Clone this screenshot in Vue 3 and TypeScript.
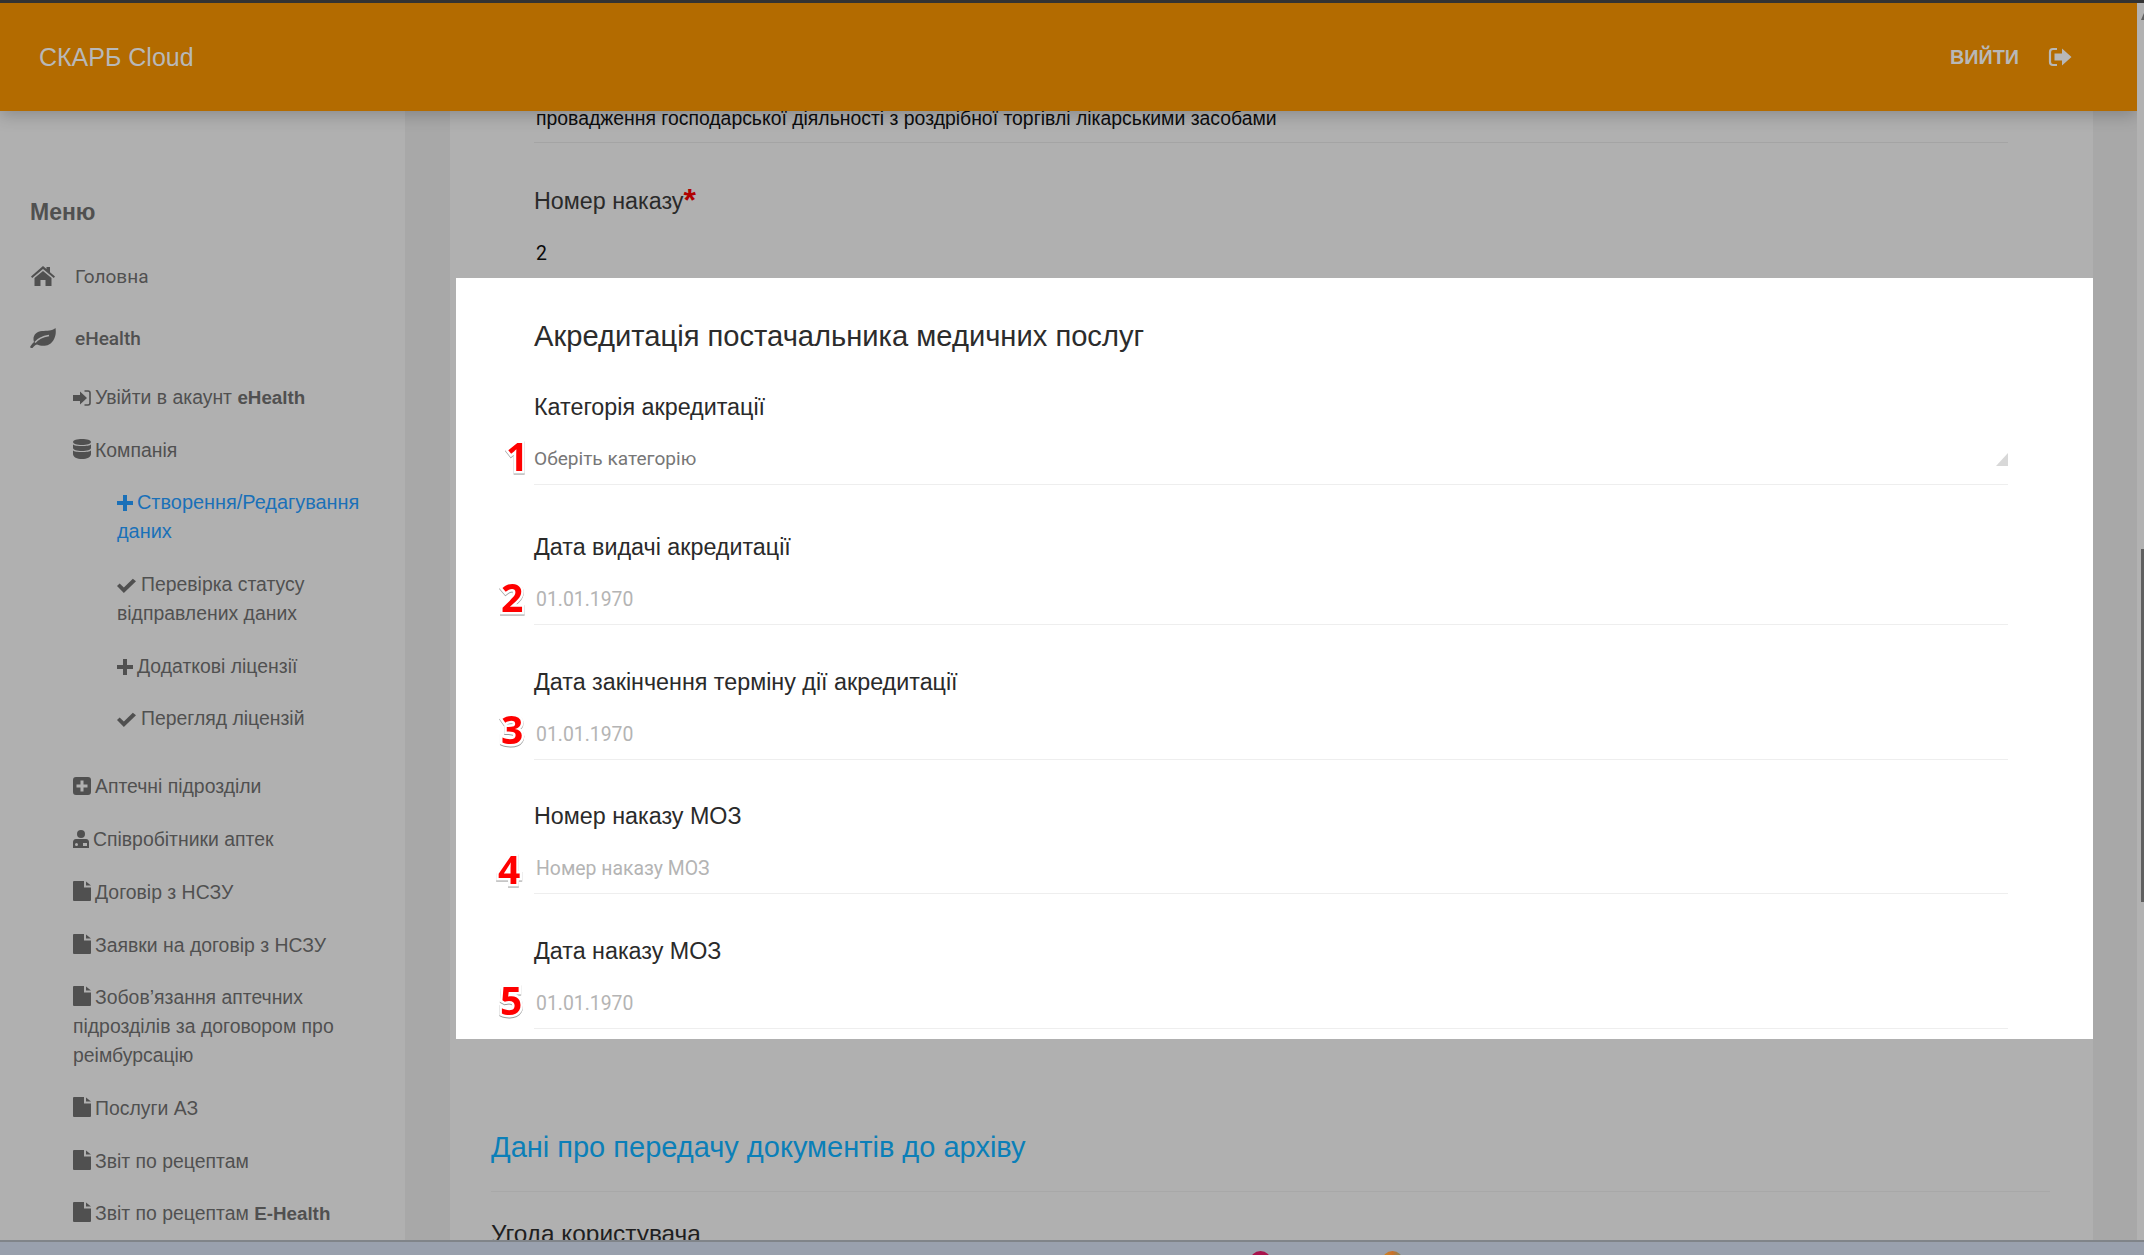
<script setup lang="ts">
interface NavItem { icon: string; text: string; bold?: string; level: number; active?: boolean; gapped?: boolean }
const nav: NavItem[] = [
  { icon: 'signin', text: 'Увійти в акаунт ', bold: 'eHealth', level: 1 },
  { icon: 'db', text: 'Компанія', level: 1 },
  { icon: 'plus', text: 'Створення/Редагування даних', level: 2, active: true },
  { icon: 'check', text: 'Перевірка статусу відправлених даних', level: 2 },
  { icon: 'plus', text: 'Додаткові ліцензії', level: 2 },
  { icon: 'check', text: 'Перегляд ліцензій', level: 2 },
  { icon: 'plusbox', text: 'Аптечні підрозділи', level: 1, gapped: true },
  { icon: 'doctor', text: 'Співробітники аптек', level: 1 },
  { icon: 'file', text: 'Договір з НСЗУ', level: 1 },
  { icon: 'file', text: 'Заявки на договір з НСЗУ', level: 1 },
  { icon: 'file', text: 'Зобов’язання аптечних підрозділів за договором про реімбурсацію', level: 1 },
  { icon: 'file', text: 'Послуги АЗ', level: 1 },
  { icon: 'file', text: 'Звіт по рецептам', level: 1 },
  { icon: 'file', text: 'Звіт по рецептам ', bold: 'E-Health', level: 1 },
]
const fields = [
  { label: 'Категорія акредитації', value: 'Оберіть категорію', kind: 'select', n: '1' },
  { label: 'Дата видачі акредитації', value: '01.01.1970', kind: 'input', n: '2' },
  { label: 'Дата закінчення терміну дії акредитації', value: '01.01.1970', kind: 'input', n: '3' },
  { label: 'Номер наказу МОЗ', value: 'Номер наказу МОЗ', kind: 'input', n: '4' },
  { label: 'Дата наказу МОЗ', value: '01.01.1970', kind: 'input', n: '5' },
]
</script>

<template>
  <div class="screen">
    <header class="topbar">
      <span class="brand">СКАРБ Cloud</span>
      <span class="logout">ВИЙТИ
        <svg class="logout-icon" viewBox="0 0 24 20" width="24" height="20">
          <path fill="none" stroke="currentColor" stroke-width="2.2" d="M9 2H5a3 3 0 0 0-3 3v10a3 3 0 0 0 3 3h4" />
          <path fill="currentColor" d="M14 1.500 23.500 10 14 18.500V13.500H6.500V6.500H14z" />
        </svg>
      </span>
    </header>
    <div class="body">
      <aside class="sidebar">
        <h3 class="menu-title">Меню</h3>
        <a class="top-link">
          <svg class="top-icon" viewBox="0 0 24 20" width="24" height="20"><path fill="currentColor" d="M12 0 15.500 3V1H19V6.200L24 10.500 22.800 12 12 3 1.200 12 0 10.500zM12 5 20.500 12V20H14.500V14H9.500V20H3.500V12z" /></svg>
          <span>Головна</span>
        </a>
        <a class="top-link second">
          <svg class="leaf-icon" viewBox="0 0 26 20" width="26" height="20">
            <path fill="currentColor" d="M25.500 0C26.500 6 25 13 19 16.500 14 19 10 17.500 7 16.500 5 17 3.500 18.500 2.500 20H0.800C0 19.500 0 18.500 1 17.500 2 16 3 15 4 14 2 8 6 3.500 12 3 17 2.600 22 3 25.500 0Z" />
            <path fill="none" stroke="#b0b0b0" stroke-width="1.500" d="M5 14.500C8 10.500 13 8.500 19 7.500" />
          </svg>
          <span class="semi">eHealth</span>
        </a>
        <ul class="nav">
          <li v-for="item in nav" :key="item.text + item.icon" class="nav-item" :class="['lvl' + item.level, { active: item.active, gapped: item.gapped }]">
            <svg v-if="item.icon === 'signin'" class="ico" viewBox="0 0 18 16" width="18" height="16"><path fill="currentColor" d="M7 1.500 14 8 7 14.500V11H0V5H7z" /><path fill="none" stroke="currentColor" stroke-width="1.600" d="M11.500 1H15a2 2 0 0 1 2 2V13a2 2 0 0 1-2 2H11.500" /></svg>
            <svg v-else-if="item.icon === 'db'" class="ico" viewBox="0 0 18 20" width="18" height="20"><path fill="currentColor" d="M9 0C14 0 18 1.300 18 3S14 6 9 6 0 4.700 0 3 4 0 9 0ZM0 5.500C2 7.500 16 7.500 18 5.500V9C18 10.700 14 12 9 12S0 10.700 0 9ZM0 11.500C2 13.500 16 13.500 18 11.500V15C18 18 14 20 9 20S0 18 0 15Z" /></svg>
            <svg v-else-if="item.icon === 'plus'" class="ico" viewBox="0 0 16 16" width="16" height="16"><path fill="currentColor" d="M6 0H10V6H16V10H10V16H6V10H0V6H6Z" /></svg>
            <svg v-else-if="item.icon === 'check'" class="ico ico-check" viewBox="0 0 18 14" width="19" height="15"><path fill="currentColor" d="M0 7.500 2.500 5 6.500 9 15 0.500 18 3 6.500 14Z" /></svg>
            <svg v-else-if="item.icon === 'plusbox'" class="ico" viewBox="0 0 18 18" width="18" height="18"><path fill="currentColor" fill-rule="evenodd" d="M3 0H15A3 3 0 0 1 18 3V15A3 3 0 0 1 15 18H3A3 3 0 0 1 0 15V3A3 3 0 0 1 3 0ZM7.500 3.500V7.500H3.500V10.500H7.500V14.500H10.500V10.500H14.500V7.500H10.500V3.500Z" /></svg>
            <svg v-else-if="item.icon === 'doctor'" class="ico" viewBox="0 0 16 18" width="16" height="18"><circle cx="8" cy="4" r="4" fill="currentColor" /><path fill="currentColor" fill-rule="evenodd" d="M3 9H13C15 9 16 10.500 16 12V18H0V12C0 10.500 1 9 3 9ZM3.500 13A1.500 1.500 0 1 0 3.500 16 1.500 1.500 0 0 0 3.500 13ZM10 13V16H14V13Z" /></svg>
            <svg v-else class="ico" viewBox="0 0 18 20" width="18" height="20"><path fill="currentColor" d="M0 1A1 1 0 0 1 1 0H11V6.500H18V19A1 1 0 0 1 17 20H1A1 1 0 0 1 0 19ZM13 0.500 18 4.500H13Z" /></svg>
            <span>{{ item.text }}<b v-if="item.bold">{{ item.bold }}</b></span>
          </li>
        </ul>
      </aside>
      <div class="gutter" />
      <main class="content">
        <div class="form-head">
          <p class="prev-text">провадження господарської діяльності з роздрібної торгівлі лікарськими засобами</p>
          <div class="row-order">
            <label class="dim-label">Номер наказу<i class="req">*</i></label>
            <div class="dim-value">2</div>
          </div>
        </div>
        <section class="spot">
          <h2 class="spot-title">Акредитація постачальника медичних послуг</h2>
          <div v-for="f in fields" :key="f.n" class="field" :class="'f' + f.n">
            <label class="field-label">{{ f.label }}</label>
            <div class="field-value" :class="f.kind">
              <span class="mark" :class="'m' + f.n">{{ f.n }}</span>
              {{ f.value }}
              <i v-if="f.kind === 'select'" class="tri" />
            </div>
          </div>
        </section>
        <section class="archive">
          <h2 class="archive-title">Дані про передачу документів до архіву</h2>
          <label class="user-label">Угода користувача</label>
        </section>
      </main>
      <div class="gutter right" />
    </div>
    <div class="scrollbar">
      <i class="sb-arrow" />
      <i class="sb-thumb" />
    </div>
    <footer class="taskbar">
      <i class="dot dot-red" />
      <i class="dot dot-multi" />
    </footer>
  </div>
</template>

<style scoped>
.screen { position: relative; width: 2144px; height: 1255px; display: flex; flex-direction: column; overflow: hidden; background: #b0b0b0; border-top: 3px solid #333; box-sizing: border-box; font-family: "Liberation Sans", Arial, sans-serif; }
.topbar { flex: none; height: 108px; width: 2137px; background: #b36b00; display: flex; align-items: center; justify-content: space-between; padding: 0 65px 0 39px; box-sizing: border-box; box-shadow: 0 4px 16px rgba(0,0,0,.22); position: relative; z-index: 2; color: #b8b8b8; }
.brand { font-size: 25px; }
.logout { font-size: 19.800px; font-weight: 700; display: flex; align-items: center; gap: 29px; }
.logout-icon { display: block; }
.body { flex: 1; min-height: 0; display: flex; overflow: hidden; }
.sidebar { flex: none; width: 405px; box-sizing: border-box; padding: 0 30px; color: #505050; font-family: Roboto, "Liberation Sans", sans-serif; font-size: 19px; overflow: hidden; }
.menu-title { margin: 89px 0 0; font: 700 23px/24px "Liberation Sans", sans-serif; }
.top-link { display: flex; align-items: center; height: 30px; margin-top: 37px; gap: 20px; }
.top-link.second { margin-top: 32px; }
.top-icon { flex: none; margin-left: 1px; width: 24px; }
.leaf-icon { flex: none; margin: 0 -1px 0 0; width: 26px; height: 20px; }
.semi { font-weight: 500; }
.nav { list-style: none; margin: 30px 0 0; padding: 0; font-family: "Liberation Sans", sans-serif; font-size: 19.400px; }
.nav-item { line-height: 29px; margin-bottom: 23.700px; padding-left: 43px; }
.nav-item.lvl2 { padding-left: 87px; padding-right: 8px; }
.nav-item.active { color: #1a70b8; font-size: 19.900px; }
.nav-item.gapped { margin-top: 39px; }
.nav-item b { font-weight: 700; font-size: 18.800px; }
.ico { margin-right: 4px; vertical-align: -2px; }
.ico-check { margin-right: 5px; }
.gutter { flex: none; width: 45px; background: #a8a8a8; }
.gutter.right { width: 44px; }
.content { flex: none; width: 1643px; box-sizing: border-box; overflow: hidden; background: #b0b0b0; }
.form-head { padding: 0 84px; height: 167px; box-sizing: border-box; }
.prev-text { margin: 0; height: 32px; line-height: 14px; font-size: 19.400px; color: #0c0c0c; border-bottom: 1px solid #a4a4a4; width: 1474px; padding-left: 2px; box-sizing: border-box; }
.row-order { padding-top: 44px; }
.dim-label { display: block; font-size: 23.300px; line-height: 28px; color: #2a2a2a; }
.req { color: #b00000; font-style: normal; font-weight: 700; font-size: 32px; line-height: 0; vertical-align: -2px; }
.dim-value { font: 19.400px/24px Roboto, sans-serif; color: #0a0a0a; margin: 27px 0 0 2px; }
.spot { margin-left: 6px; background: #fff; height: 761px; box-sizing: border-box; padding: 42px 83px 0 78px; }
.spot-title { margin: 0 0 41px; font-weight: 400; font-size: 29.150px; line-height: 32px; color: #2c2c2c; }
.field { height: 134.500px; }
.f1 { height: 140px; }
.field-label { display: block; font-size: 23.300px; line-height: 28px; color: #2a2a2a; }
.field-value { position: relative; height: 51px; margin-top: 13px; box-sizing: border-box; border-bottom: 1px solid #eee; padding: 14px 0 0 2px; font: 19.400px/24px Roboto, sans-serif; color: #b4b4b4; width: 1474px; }
.f1 .field-value { padding: 13px 0 0; color: #777; font-size: 19.100px; }
.tri { position: absolute; right: 0; top: 19px; width: 12px; height: 13px; background: #d8d8d8; clip-path: polygon(100% 0, 100% 100%, 0 100%); }
.mark { position: absolute; top: 1px; font: 700 39px/44px "Open Sans", sans-serif; color: #f00; -webkit-text-stroke: 5px #fff; paint-order: stroke fill; filter: drop-shadow(0 1px 0 #999); }
.m1 { left: -28px; top: 0; }
.m2 { left: -33px; }
.m3 { left: -33px; top: -2px; }
.m4 { left: -36px; top: 4px; }
.m5 { left: -34px; top: 0; }
.archive { padding: 0 43px 0 41px; }
.archive-title { margin: 91px 0 0; padding-bottom: 27px; font-weight: 400; font-size: 29px; line-height: 34px; color: #0b7fb8; border-bottom: 1px solid #a8a8a8; }
.user-label { display: block; margin-top: 28px; font-size: 24.400px; line-height: 28px; color: #1f1f1f; }
.scrollbar { position: absolute; z-index: 2; right: 0; top: 0; bottom: 15px; width: 7px; background: #b2b2b2; }
.sb-arrow { position: absolute; right: 0; top: 10px; width: 3px; height: 7px; background: #606060; clip-path: polygon(100% 0, 100% 100%, 0 100%); }
.sb-thumb { position: absolute; right: 0; top: 546px; width: 3px; height: 353px; background: #606060; }
.taskbar { flex: none; height: 15px; box-sizing: border-box; border-top: 2px solid #808489; background: #99a0ad; position: relative; z-index: 3; overflow: hidden; display: flex; }
.dot { display: block; width: 21px; height: 21px; border-radius: 50%; margin-top: 9px; }
.dot-red { background: #a8124c; margin-left: 1250px; }
.dot-multi { margin-left: 111px; background: conic-gradient(#c9702a, #2aa0a0, #c9a02a, #c9702a); }
</style>

<style>
html, body { margin: 0; padding: 0; overflow: hidden; }
</style>
